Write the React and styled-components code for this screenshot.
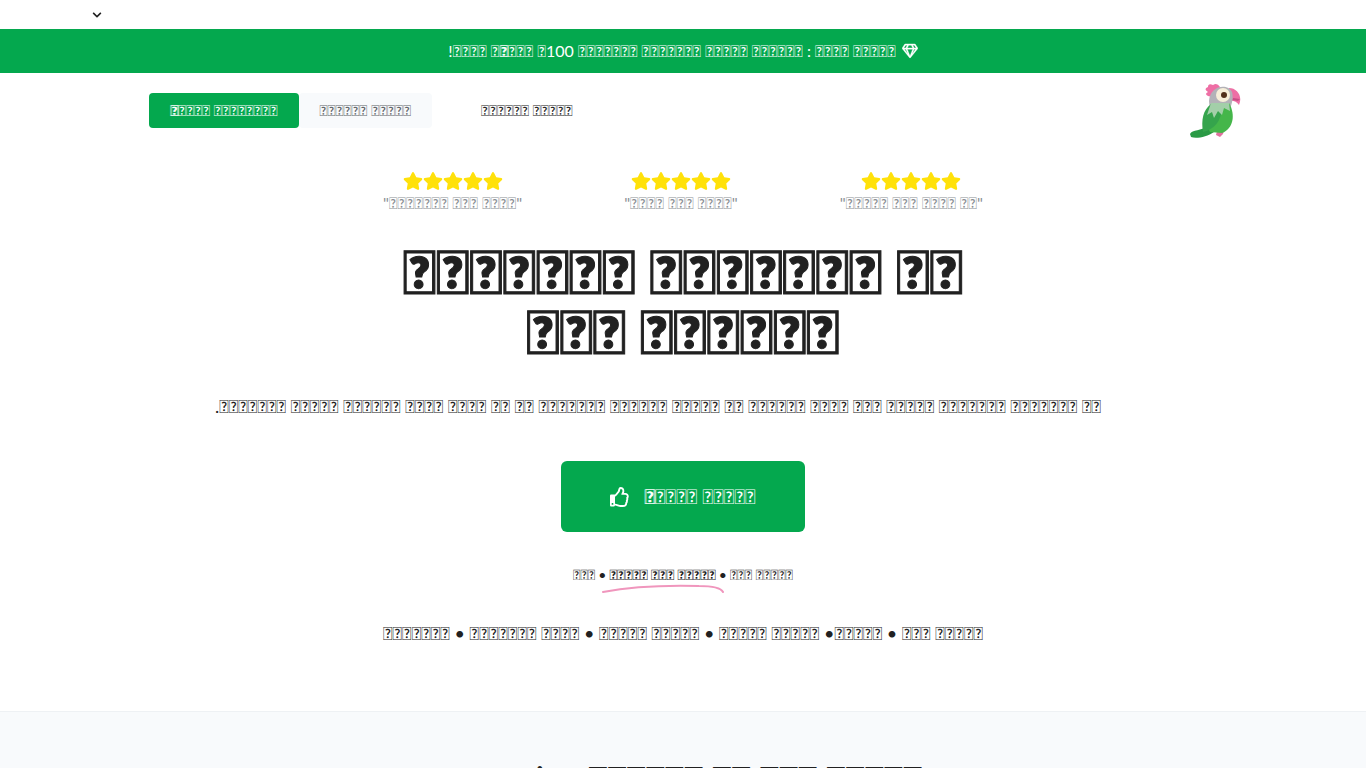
import styled, { createGlobalStyle } from "styled-components";
import { FaRegGem, FaRegThumbsUp, FaStar, FaChevronDown } from "react-icons/fa";

const GlobalStyle = createGlobalStyle`
  * {
    box-sizing: border-box;
  }
  body {
    margin: 0;
    background: #fff;
    color: #212121;
    font-family: Lato, Carlito, sans-serif;
    font-size: 16px;
    line-height: 24px;
    text-rendering: optimizeLegibility;
  }
`;

const Marked = styled.span`
  text-shadow: 1px 0 currentColor;
`;

const TopBar = styled.div`
  display: flex;
  height: 29px;
  padding: 0 92px;
`;

const LanguageButton = styled.button`
  display: flex;
  align-items: center;
  padding: 0;
  border: none;
  background: none;
  color: #212121;
  font-size: 10px;
  cursor: pointer;
`;

const Banner = styled.div`
  display: flex;
  justify-content: center;
  align-items: center;
  gap: 6px;
  padding: 10px 0;
  background: #04a84e;
  color: #fff;
  svg {
    stroke-width: 12;
  }
`;

const Nav = styled.nav`
  display: flex;
  justify-content: space-between;
  align-items: center;
  height: 75px;
  padding: 0 124px 0 149px;
`;

const NavItems = styled.div`
  display: flex;
  align-items: center;
  gap: 28px;
`;

const NavGroup = styled.div`
  display: flex;
`;

const NavLink = styled.a`
  padding: 5px 21px 6px;
  border-radius: 4px;
  background: ${(props) => props.$background || "transparent"};
  color: ${(props) => props.$color || "#212121"};
  font-size: 15px;
  text-decoration: none;
`;

const Hero = styled.main`
  display: flex;
  flex-direction: column;
  align-items: center;
  padding: 23px 24px 64px;
`;

const Reviews = styled.div`
  display: flex;
  gap: 102px;
`;

const Review = styled.div`
  display: flex;
  flex-direction: column;
  align-items: center;
  color: #8a8f94;
`;

const Stars = styled.div`
  display: flex;
  color: #ffe10a;
  font-size: 20px;
`;

const Title = styled.h1`
  margin: 26px 0 0;
  font-size: 60px;
  font-weight: 900;
  line-height: 60px;
  text-align: center;
  -webkit-text-stroke: 1px currentColor;
`;

const Lead = styled.p`
  margin: 31px 0 0;
  padding-right: 50px;
  font-size: 18px;
  line-height: 28px;
`;

const CallToAction = styled.button`
  display: flex;
  align-items: center;
  gap: 14px;
  margin-top: 41px;
  padding: 22px 49px;
  border: none;
  border-radius: 6px;
  background: #04a84e;
  color: #fff;
  font-family: inherit;
  font-size: 20px;
  line-height: 27px;
  cursor: pointer;
`;

const Terms = styled.p`
  display: flex;
  gap: 3px;
  margin: 31px 0 0;
  font-size: 14px;
`;

const Underlined = styled.b`
  position: relative;
`;

const Stroke = styled.svg`
  position: absolute;
  left: -8px;
  top: 21px;
`;

const Languages = styled.p`
  margin: 32px 0 0;
  font-size: 18px;
  line-height: 28px;
`;

const Section = styled.section`
  padding: 43px 24px;
  border-top: 1px solid #eef1f4;
  background: #f8fafc;
  text-align: center;
`;

const SectionTitle = styled.h2`
  margin: 0;
  font-size: 36px;
  font-weight: 400;
  line-height: 48px;
`;

// private use character, drawn as the boxed question mark of Lato
const BOX = "\ue123";

const words = (...lengths) => lengths.map((n) => BOX.repeat(n)).join(" ");

const reviews = [words(7, 3, 4), words(4, 3, 4), words(5, 3, 4, 2)];

function Parrot() {
  return (
    <svg width="52" height="56" viewBox="0 0 52 56" aria-hidden="true">
      <path d="M0 51C2 46 12 49 17 42L24 49C17 54 6 56 1 54Z" fill="#2a9a45" />
      <path d="M27 48L34 47L33 51L30 54L26 52Z" fill="#e0709e" />
      <path d="M22 14L18 13Q14 11 18 9Q13 6 18 4Q18 0 23 2Q27 -1 30 4L25 13Z" fill="#ee6fa5" />
      <path d="M39 5C47 5 53 13 49 22C47 18 42 17 38 18Z" fill="#ee6fa5" />
      <path d="M43 15L50 16L48 18L42 17Z" fill="#c94e86" />
      <path d="M19 18C20 2 38 0 42 9C44 16 41 22 40 27L20 29Z" fill="#b3b2b8" />
      <path d="M39 20C46 32 43 46 32 50L20 49C15 40 17 25 23 21Z" fill="#45b64a" />
      <path d="M21 21C13 27 11 37 13 49C25 46 31 38 32 25Z" fill="#35a44c" />
      <path d="M21 20L17 32L22 29L24 35L28 28L32 32L34 25L40 28L39 20Z" fill="#a3cfa9" />
      <circle cx="33" cy="12" r="7" fill="#f7efd9" />
      <circle cx="34" cy="12" r="3" fill="#52311b" />
    </svg>
  );
}

function App() {
  return (
    <>
      <GlobalStyle />
      <TopBar>
        <LanguageButton aria-label="Language">
          <FaChevronDown />
        </LanguageButton>
      </TopBar>
      <Banner>
        <span>
          !{words(4)} {BOX}
          <Marked>{BOX}</Marked>
          {words(3)} {BOX}100 {words(7, 7, 5, 6)} : {words(4, 5)}
        </span>
        <FaRegGem />
      </Banner>
      <Nav>
        <NavItems>
          <NavGroup>
            <NavLink href="#start" $background="#04a84e" $color="#fff">
              <Marked>{BOX}</Marked>
              {words(4, 8)}
            </NavLink>
            <NavLink href="#login" $background="#f8fafc" $color="#5f6368">
              {words(6, 5)}
            </NavLink>
          </NavGroup>
          <NavLink href="#teachers">{words(6, 5)}</NavLink>
        </NavItems>
        <Parrot />
      </Nav>
      <Hero>
        <Reviews>
          {reviews.map((text) => (
            <Review key={text}>
              <Stars>
                <FaStar />
                <FaStar />
                <FaStar />
                <FaStar />
                <FaStar />
              </Stars>
              <span>"{text}"</span>
            </Review>
          ))}
        </Reviews>
        <Title>
          {words(7, 7, 2)}
          <br />
          {words(3, 6)}
        </Title>
        <Lead>.{words(7, 5, 6, 4, 4, 2, 2, 7, 6, 5, 2, 6, 4, 3, 5, 7, 7, 2)}</Lead>
        <CallToAction>
          <FaRegThumbsUp />
          <span>
            <Marked>{BOX}</Marked>
            {words(4, 5)}
          </span>
        </CallToAction>
        <Terms>
          <span>{words(3)}</span>•
          <Underlined>
            {words(5, 3, 5)}
            <Stroke width="124" height="10" viewBox="0 0 124 10" fill="none" aria-hidden="true">
              <path d="M2 8C28 3 60 1 98 2Q119 2 122 8" stroke="#f096bd" strokeWidth="2" strokeLinecap="round" />
            </Stroke>
          </Underlined>
          •<span>{words(3, 5)}</span>
        </Terms>
        <Languages>
          {words(7)} • {words(7, 4)} • {words(5, 5)} • {words(5, 5)} •{words(5)} • {words(3, 5)}
        </Languages>
      </Hero>
      <Section>
        <SectionTitle>memrise {words(6, 2, 3, 5)}</SectionTitle>
      </Section>
    </>
  );
}

export default App;
